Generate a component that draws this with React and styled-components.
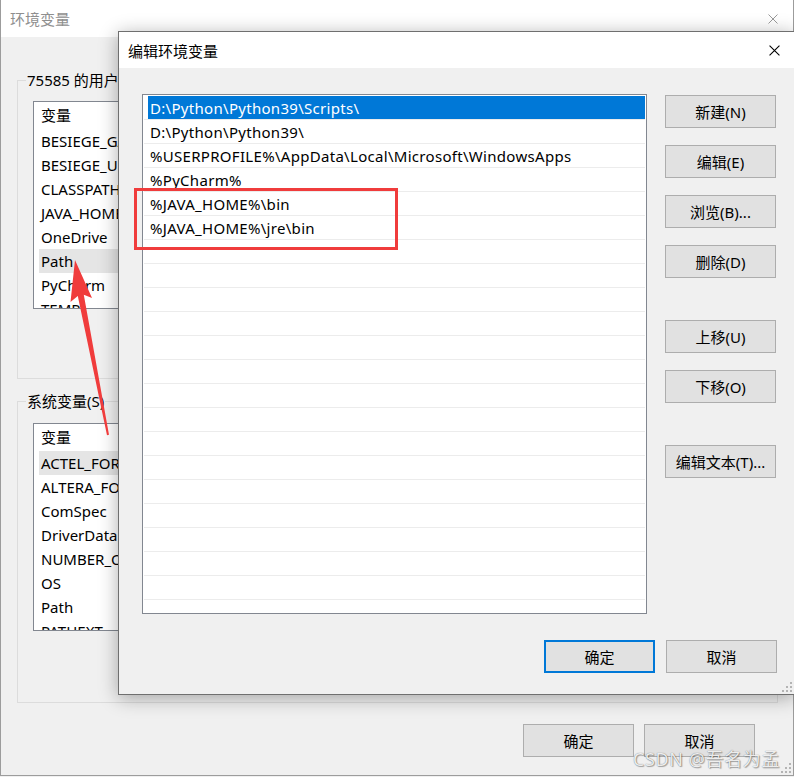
import React from 'react';
import styled, { createGlobalStyle } from 'styled-components';

const GlobalStyle = createGlobalStyle`
  html, body { margin: 0; padding: 0; }
  body {
    width: 794px;
    height: 777px;
    overflow: hidden;
    background: #f0f0f0;
    font-family: "Noto Sans", "Noto Sans CJK SC", sans-serif;
    font-size: 15px;
    color: #000;
  }
`;

const userVars = ['BESIEGE_GAME', 'BESIEGE_UNITY', 'CLASSPATH', 'JAVA_HOME', 'OneDrive', 'Path', 'PyCharm', 'TEMP', 'TMP'];
const sysVars = ['ACTEL_FOR', 'ALTERA_FO', 'ComSpec', 'DriverData', 'NUMBER_OF', 'OS', 'Path', 'PATHEXT', 'PROCESSOR'];
const paths = [
  'D:\\Python\\Python39\\Scripts\\',
  'D:\\Python\\Python39\\',
  '%USERPROFILE%\\AppData\\Local\\Microsoft\\WindowsApps',
  '%PyCharm%',
  '%JAVA_HOME%\\bin',
  '%JAVA_HOME%\\jre\\bin',
];

const Desktop = styled.div`
  position: relative;
  width: 794px;
  height: 777px;
  overflow: hidden;
`;

const Window = styled.div`
  position: absolute;
  left: ${p => p.$left}px;
  top: ${p => p.$top}px;
  width: ${p => p.$width}px;
  height: ${p => p.$height}px;
  box-sizing: border-box;
  display: flex;
  flex-direction: column;
  background: #f0f0f0;
  border: 1px solid ${p => (p.$active ? '#6f6f6f' : '#9c9c9c')};
  box-shadow: ${p => (p.$active ? '0 3px 18px rgba(0,0,0,0.32)' : 'none')};
`;

const TitleBar = styled.div`
  flex: none;
  height: ${p => p.$height}px;
  display: flex;
  align-items: center;
  justify-content: space-between;
  padding: 0 ${p => p.$padRight}px 0 9px;
  background: #fff;
  color: ${p => (p.$active ? '#000' : '#8f8f8f')};
`;

const BgBody = styled.div`
  display: flex;
  flex-direction: column;
  padding: 43px 15px 0 16px;
`;

const GroupBox = styled.div`
  position: relative;
  height: ${p => p.$height}px;
  box-sizing: border-box;
  border: 1px solid #dcdcdc;
  padding: ${p => p.$padTop}px 15px 0 15px;
  margin-top: ${p => p.$mt || 0}px;
`;

const GroupLabel = styled.span`
  position: absolute;
  top: -12px;
  left: 8px;
  padding: 0 1px;
  line-height: 22px;
  background: #f0f0f0;
`;

const VarList = styled.div`
  height: 208px;
  box-sizing: border-box;
  border: 1px solid #828790;
  background: #fff;
  padding: 0 5px;
  overflow: hidden;
`;

const VarHeader = styled.div`
  height: 27px;
  line-height: 27px;
  padding-left: 2px;
`;

const VarRow = styled.div`
  height: 24px;
  line-height: 24px;
  padding-left: 2px;
  background: ${p => (p.$hover ? '#e5e5e5' : 'transparent')};
`;

const Footer = styled.div`
  display: flex;
  justify-content: flex-end;
  gap: ${p => p.$gap}px;
  margin-top: ${p => p.$mt}px;
  padding-right: ${p => p.$pr}px;
`;

const Button = styled.button`
  width: 111px;
  height: 33px;
  box-sizing: border-box;
  margin: 0;
  margin-top: ${p => p.$mt || 0}px;
  padding: 0;
  font: inherit;
  color: #000;
  background: #e1e1e1;
  border: ${p => (p.$default ? '2px solid #0078d7' : '1px solid #adadad')};
`;

const FgBody = styled.div`
  display: flex;
  flex-direction: column;
  padding: 26px 17px 0 23px;
`;

const FgMain = styled.div`
  display: flex;
  gap: 18px;
`;

const PathList = styled.div`
  width: 505px;
  height: 520px;
  box-sizing: border-box;
  border: 1px solid #828790;
  background: #fff;
  padding: 1px;
`;

const PathRow = styled.div`
  height: 24px;
  box-sizing: border-box;
  border-bottom: 1px solid #ececec;
`;

const PathCell = styled.div`
  height: 23px;
  line-height: 24px;
  margin-left: 4px;
  padding-left: 2px;
  white-space: nowrap;
  letter-spacing: 0.3px;
  background: ${p => (p.$selected ? '#0078d7' : 'transparent')};
  color: ${p => (p.$selected ? '#fff' : '#000')};
`;

const ButtonColumn = styled.div`
  display: flex;
  flex-direction: column;
  gap: 17px;
`;

const Grip = styled.svg`
  position: absolute;
  right: 2px;
  bottom: 2px;
`;

const Highlight = styled.div`
  position: absolute;
  left: 134px;
  top: 188px;
  width: 264px;
  height: 62px;
  box-sizing: border-box;
  border: 3px solid #f03c3c;
`;

const Overlay = styled.svg`
  position: absolute;
  left: 0;
  top: 0;
  pointer-events: none;
`;

const Watermark = styled.div`
  position: absolute;
  right: 14px;
  bottom: 6px;
  font-family: "Noto Sans", "Noto Sans CJK SC", sans-serif;
  font-size: 18px;
  letter-spacing: 0.6px;
  color: rgba(255, 255, 255, 0.88);
  text-shadow: 0 0 1px rgba(0, 0, 0, 0.55), 1px 1px 1px rgba(0, 0, 0, 0.3);
`;

function CloseIcon({ color, size }) {
  return (
    <svg width={size} height={size} viewBox="0 0 10 10">
      <path d="M0.5 0.5 L9.5 9.5 M9.5 0.5 L0.5 9.5" stroke={color} strokeWidth="1" fill="none" />
    </svg>
  );
}

function ResizeGrip() {
  const dots = [[8, 0], [4, 4], [8, 4], [0, 8], [4, 8], [8, 8]];
  return (
    <Grip width="10" height="10" viewBox="0 0 10 10">
      {dots.map(([x, y]) => <rect key={`${x}-${y}`} x={x} y={y} width="2" height="2" fill="#b4b4b4" />)}
    </Grip>
  );
}

function VariableBox({ label, items, hover, height, padTop, mt }) {
  return (
    <GroupBox $height={height} $padTop={padTop} $mt={mt}>
      <GroupLabel>{label}</GroupLabel>
      <VarList>
        <VarHeader>变量</VarHeader>
        {items.map(name => (
          <VarRow key={name} $hover={name === hover}>{name}</VarRow>
        ))}
      </VarList>
    </GroupBox>
  );
}

export default function App() {
  const rows = Array.from({ length: 21 }, (_, i) => paths[i] || '');

  return (
    <Desktop>
      <GlobalStyle />

      <Window $left={0} $top={-1} $width={794} $height={777}>
        <TitleBar $height={37} $padRight={15}>
          <span>环境变量</span>
          <CloseIcon color="#9a9a9a" size={10} />
        </TitleBar>
        <BgBody>
          <VariableBox label="75585 的用户变量(U)" items={userVars} hover="Path" height={299} padTop={20} />
          <VariableBox label="系统变量(S)" items={sysVars} hover="ACTEL_FOR" height={302} padTop={21} mt={22} />
          <Footer $gap={10} $mt={21} $pr={23}>
            <Button>确定</Button>
            <Button>取消</Button>
          </Footer>
        </BgBody>
        <ResizeGrip />
      </Window>

      <Window $active $left={118} $top={31} $width={677} $height={664}>
        <TitleBar $active $height={36} $padRight={14}>
          <span>编辑环境变量</span>
          <CloseIcon color="#000" size={11} />
        </TitleBar>
        <FgBody>
          <FgMain>
            <PathList>
              {rows.map((text, i) => (
                <PathRow key={i}>
                  <PathCell $selected={i === 0}>{text}</PathCell>
                </PathRow>
              ))}
            </PathList>
            <ButtonColumn>
              <Button $mt={1}>新建(N)</Button>
              <Button>编辑(E)</Button>
              <Button>浏览(B)...</Button>
              <Button>删除(D)</Button>
              <Button $mt={25}>上移(U)</Button>
              <Button>下移(O)</Button>
              <Button $mt={25}>编辑文本(T)...</Button>
            </ButtonColumn>
          </FgMain>
          <Footer $gap={11} $mt={26} $pr={0}>
            <Button $default>确定</Button>
            <Button>取消</Button>
          </Footer>
        </FgBody>
        <ResizeGrip />
      </Window>

      <Highlight />

      <Overlay width="794" height="777" viewBox="0 0 794 777">
        <polygon
          points="75,260 92,298 83.8,294.8 109,434.8 107,435.2 77.8,296 70.5,302"
          fill="#f03c3c"
        />
      </Overlay>

      <Watermark>CSDN @吾名为孟</Watermark>
    </Desktop>
  );
}
